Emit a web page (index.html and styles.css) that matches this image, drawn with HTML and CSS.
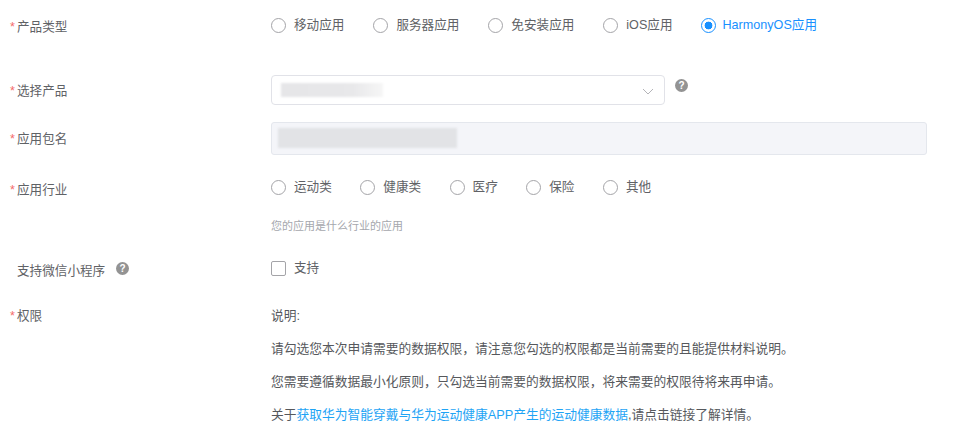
FILE: index.html
```html
<!DOCTYPE html>
<html lang="zh">
<head>
<meta charset="utf-8">
<title>申请</title>
<link rel="stylesheet" href="styles.css">
</head>
<body>
<form class="form">
  <div class="row row-type">
    <div class="label"><span class="star">*</span>产品类型</div>
    <div class="radios radios-type">
      <label class="opt"><span class="radio"></span>移动应用</label>
      <label class="opt"><span class="radio"></span>服务器应用</label>
      <label class="opt"><span class="radio"></span>免安装应用</label>
      <label class="opt"><span class="radio"></span>iOS应用</label>
      <label class="opt opt-on"><span class="radio radio-on"></span>HarmonyOS应用</label>
    </div>
  </div>
  <div class="row row-product">
    <div class="label"><span class="star">*</span>选择产品</div>
    <div class="select-wrap">
      <div class="select">
        <span class="mask mask-select"></span>
        <svg class="chevron" width="12" height="7" viewBox="0 0 12 7"><path d="M1 1l5 5 5-5" fill="none" stroke="#b4b4b8" stroke-width="1"/></svg>
      </div>
      <span class="help help-select">?</span>
    </div>
  </div>
  <div class="row row-package">
    <div class="label"><span class="star">*</span>应用包名</div>
    <div class="input"><span class="mask mask-input"></span></div>
  </div>
  <div class="row row-industry">
    <div class="label"><span class="star">*</span>应用行业</div>
    <div class="field">
      <div class="radios radios-industry">
        <label class="opt"><span class="radio"></span>运动类</label>
        <label class="opt"><span class="radio"></span>健康类</label>
        <label class="opt"><span class="radio"></span>医疗</label>
        <label class="opt"><span class="radio"></span>保险</label>
        <label class="opt"><span class="radio"></span>其他</label>
      </div>
      <p class="hint">您的应用是什么行业的应用</p>
    </div>
  </div>
  <div class="row row-wechat">
    <div class="label label-wechat">支持微信小程序<span class="help help-label">?</span></div>
    <label class="opt"><span class="check"></span>支持</label>
  </div>
  <div class="row row-perm">
    <div class="label"><span class="star">*</span>权限</div>
    <div class="notes">
      <p>说明:</p>
      <p>请勾选您本次申请需要的数据权限，请注意您勾选的权限都是当前需要的且能提供材料说明。</p>
      <p>您需要遵循数据最小化原则，只勾选当前需要的数据权限，将来需要的权限待将来再申请。</p>
      <p>关于<a class="link" href="#">获取华为智能穿戴与华为运动健康APP产生的运动健康数据</a>,请点击链接了解详情。</p>
    </div>
  </div>
</form>
</body>
</html>
```

FILE: styles.css
```css
html, body {
  margin: 0;
  height: 438px;
  overflow: hidden;
  background: #fff;
}
body {
  font-family: "Liberation Sans", "Noto Sans CJK SC", sans-serif;
  font-size: 12.6px;
  color: #606266;
}
.form {
  display: flex;
  flex-direction: column;
  padding-top: 15px;
}
.row {
  display: grid;
  grid-template-columns: 271px 1fr;
}
.label {
  display: flex;
  align-items: flex-start;
  padding-left: 10px;
  line-height: 20px;
  color: #5f6266;
}
.star {
  width: 7px;
  color: #f56c6c;
  font-size: 12.6px;
  line-height: 21px;
}
.row-type .label { padding-top: 2px; }
.row-industry .label { padding-top: 3px; }
.row-wechat .label { padding-top: 3px; }
.label-wechat {
  padding-left: 17px;
}
.radios {
  display: flex;
}
.radios-type { gap: 29px; height: 20px; }
.radios-industry { gap: 28.5px; height: 20px; }
.opt {
  display: flex;
  align-items: center;
  gap: 8px;
  height: 20px;
  line-height: 20px;
  color: #606266;
}
.opt-on {
  color: #1890ff;
  gap: 7px;
  margin-left: -1px;
}
.radio {
  width: 13px;
  height: 13px;
  border: 1px solid #a4a4a8;
  border-radius: 50%;
  background: #fff;
  display: block;
}
.radio-on {
  border-color: #1890ff;
  background: radial-gradient(circle, #1890ff 0 3.6px, #fff 4.2px);
}
.check {
  width: 13px;
  height: 13px;
  border: 1px solid #a4a4a8;
  border-radius: 2px;
  display: block;
}
.row-product { margin-top: 37px; }
.row-package { margin-top: 17px; }
.row-industry { margin-top: 22px; }
.row-wechat { margin-top: 22px; }
.row-perm { margin-top: 25px; }
.row-product .label { padding-top: 6px; }
.row-package .label { padding-top: 7px; }
.select-wrap {
  display: flex;
  align-items: flex-start;
  gap: 10px;
}
.select {
  width: 394px;
  height: 30px;
  box-sizing: border-box;
  border: 1px solid #e1e2e8;
  border-radius: 4px;
  display: flex;
  align-items: center;
  justify-content: space-between;
  padding: 0 10px 0 9px;
}
.mask {
  display: block;
  background: #e6e6e8;
  filter: blur(0.8px);
}
.mask-select {
  width: 102px;
  height: 14px;
  background: linear-gradient(90deg, #e6e6e8 0, #e8e8ea 70%, #f6f6f6 100%);
}
.chevron { margin-top: 2px; }
.help {
  flex: none;
  width: 13px;
  height: 13px;
  border-radius: 50%;
  background: #939393;
  color: #fff;
  font-size: 10px;
  font-weight: 700;
  line-height: 13px;
  text-align: center;
  display: block;
}
.help-select { margin-top: 4px; }
.help-label { margin: 1px 0 0 11px; }
.input {
  width: 656px;
  height: 33px;
  box-sizing: border-box;
  border: 1px solid #e4e7ed;
  border-radius: 3px;
  background: #f4f5f9;
  padding: 5px 0 0 6px;
}
.mask-input {
  width: 179px;
  height: 20px;
  background: #e2e3e6;
}
.field { display: flex; flex-direction: column; }
.hint {
  margin: 19px 0 0;
  font-size: 11px;
  line-height: 20px;
  color: #a5a7ad;
}
.notes p {
  margin: 0 0 13px;
  font-size: 12.75px;
  line-height: 20px;
  color: #56585c;
}
.link {
  color: #1ea4f5;
  text-decoration: none;
}
```
